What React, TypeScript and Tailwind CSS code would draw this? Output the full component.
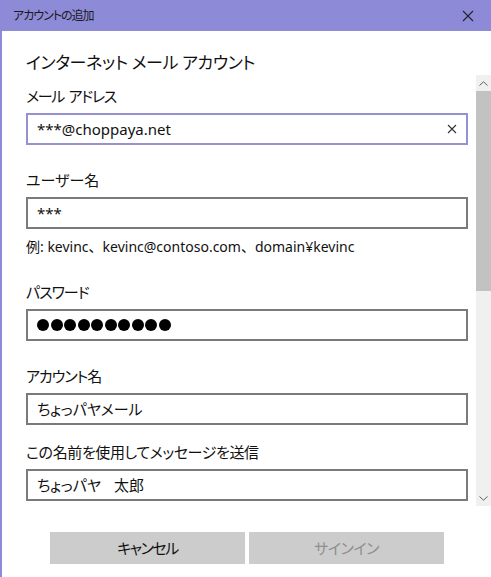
import React from 'react';

const font = { fontFamily: '"Noto Sans", "Noto Sans CJK JP", sans-serif' };

function Field({
  label,
  children,
  focused,
  gap = 'mt-[25px]',
  track = '',
}: {
  label: string;
  children: React.ReactNode;
  focused?: boolean;
  gap?: string;
  track?: string;
}) {
  return (
    <div className={gap}>
      <div className={`text-[15px] leading-[20px] text-[#111] ${track}`}>{label}</div>
      <div
        className={`mt-[7px] h-[32px] w-[442px] border-2 flex items-center pl-[9px] pr-[9px] text-[15px] text-[#111] ${
          focused ? 'border-[#9591d2]' : 'border-[#7a7a7a]'
        }`}
      >
        {children}
      </div>
    </div>
  );
}

export default function App() {
  return (
    <div
      className="w-[491px] h-[577px] flex flex-col bg-white overflow-hidden [font-feature-settings:'palt']"
      style={font}
    >
      {/* Title bar */}
      <div className="h-[31px] bg-[#8d8ad7] flex items-center justify-between pl-[13px] pr-[17px]">
        <span className="text-[12px] tracking-[-1px] text-[#1a1a1a]">アカウントの追加</span>
        <svg width="12" height="12" viewBox="0 0 12 12" className="text-[#222]">
          <path d="M1 1 L11 11 M11 1 L1 11" stroke="currentColor" strokeWidth="1.1" />
        </svg>
      </div>

      <div className="flex-1 flex flex-col border-l-2 border-[#8d8ad7]">
        {/* Heading */}
        <div className="h-[44px] pl-[24px] pt-[18px]">
          <h1 className="text-[17px] leading-[28px] tracking-[-0.4px] text-[#111]">インターネット メール アカウント</h1>
        </div>

        {/* Scroll area */}
        <div className="h-[431px] flex">
          <div className="flex-1 pl-[24px] pt-[11px] overflow-hidden">
            <Field label="メール アドレス" focused gap="" track="tracking-[-1.3px] [word-spacing:2px]">
              <span className="flex-1">***@choppaya.net</span>
              <svg width="10" height="10" viewBox="0 0 10 10" className="text-[#333]">
                <path d="M1 1 L9 9 M9 1 L1 9" stroke="currentColor" strokeWidth="1.1" />
              </svg>
            </Field>
            <Field label="ユーザー名">
              <span>***</span>
            </Field>
            <div className="mt-[8px] text-[14px] leading-[20px] text-[#111] [font-feature-settings:normal]">
              例: kevinc、kevinc@contoso.com、domain¥kevinc
            </div>
            <Field label="パスワード" track="tracking-[-1px]">
              <div className="flex gap-[1.5px]">
                {Array.from({ length: 10 }).map((_, i) => (
                  <span key={i} className="w-[12px] h-[12px] rounded-full bg-black" />
                ))}
              </div>
            </Field>
            <Field label="アカウント名" track="tracking-[-1px]">
              <span>ちょっパヤメール</span>
            </Field>
            <Field label="この名前を使用してメッセージを送信" gap="mt-[17px]" track="tracking-[-0.4px]">
              <span>
                ちょっパヤ<span className="tracking-[-2px]">　</span>太郎
              </span>
            </Field>
          </div>

          {/* Scrollbar */}
          <div className="w-[15px] flex flex-col bg-[#f0f0f0]">
            <div className="h-[16px] flex items-center justify-center">
              <svg width="9" height="5" viewBox="0 0 9 5">
                <path d="M0.5 4.5 L4.5 0.8 L8.5 4.5" fill="none" stroke="#606060" strokeWidth="1" />
              </svg>
            </div>
            <div className="h-[200px] bg-[#c2c2c2]" />
            <div className="flex-1" />
            <div className="h-[16px] flex items-center justify-center">
              <svg width="9" height="5" viewBox="0 0 9 5">
                <path d="M0.5 0.5 L4.5 4.2 L8.5 0.5" fill="none" stroke="#606060" strokeWidth="1" />
              </svg>
            </div>
          </div>
        </div>

        {/* Footer buttons */}
        <div className="flex-1 flex pl-[48px] pt-[26px] gap-[4px]">
          <button className="w-[195px] h-[32px] bg-[#cccccc] text-[15px] tracking-[-1.5px] text-[#111]">キャンセル</button>
          <button className="w-[195px] h-[32px] bg-[#cccccc] text-[15px] tracking-[-0.5px] text-[#8f8f8f]">サインイン</button>
        </div>
      </div>
    </div>
  );
}
